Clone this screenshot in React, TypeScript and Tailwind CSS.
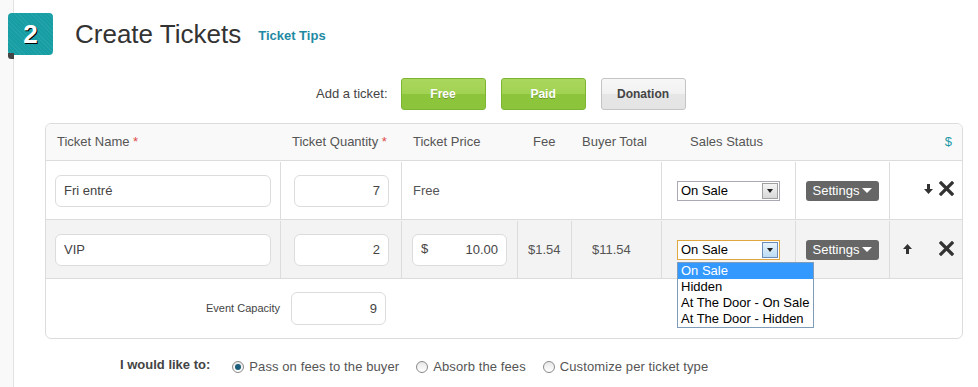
import { ReactNode } from "react";

// 販売ステータスのセレクト（見た目だけ）
function StatusSelect({ focused = false }: { focused?: boolean }) {
  return (
    <div
      className={
        "flex h-[20px] w-[103px] items-center border bg-white " +
        (focused ? "border-[#e0a640]" : "border-[#a9a9b4]")
      }
    >
      <span className="flex-1 pl-[3px] text-[13px] leading-none text-black">On Sale</span>
      <span
        className={
          "mr-[1px] flex h-[16px] w-[16px] items-center justify-center border " +
          (focused ? "border-[#6b8bb8] bg-gradient-to-b from-[#e6f2fb] to-[#bcdcf4]" : "border-[#a0a0a0] bg-gradient-to-b from-[#f4f4f4] to-[#d8d8d8]")
        }
      >
        <span className="h-0 w-0 border-x-[3px] border-t-[4px] border-x-transparent border-t-[#222]" />
      </span>
    </div>
  );
}

function SettingsButton() {
  return (
    <div className="flex h-[20px] w-[73px] items-center justify-center gap-[3px] rounded-[3px] bg-[#666] text-[13px] text-white">
      Settings
      <span className="h-0 w-0 border-x-[5px] border-t-[5px] border-x-transparent border-t-white" />
    </div>
  );
}

function Cross() {
  return (
    <svg width="15" height="15" viewBox="0 0 15 15">
      <path d="M2 2 L13 13 M13 2 L2 13" stroke="#333" strokeWidth="3.2" strokeLinecap="square" />
    </svg>
  );
}

function Arrow({ up }: { up?: boolean }) {
  return (
    <svg width="9" height="10" viewBox="0 0 9 10" className={up ? "" : "rotate-180"}>
      <path d="M4.5 0 L9 5 L6 5 L6 10 L3 10 L3 5 L0 5 Z" fill="#333" />
    </svg>
  );
}

function Field({ children, className = "" }: { children: ReactNode; className?: string }) {
  return (
    <div
      className={
        "flex h-[32px] items-center rounded-[6px] border border-[#dcdcdc] bg-white px-[8px] text-[13px] text-[#444] " +
        className
      }
    >
      {children}
    </div>
  );
}

function Radio({ checked, label }: { checked?: boolean; label: string }) {
  return (
    <div className="flex items-center gap-[5px]">
      <span className="flex h-[12px] w-[12px] items-center justify-center rounded-full border border-[#8a8a8a] bg-gradient-to-b from-[#e8e8e8] to-[#fff]">
        {checked && <span className="h-[6px] w-[6px] rounded-full bg-[#1a5d7a]" />}
      </span>
      <span className="text-[13px] tracking-[0.1px] text-[#555]">{label}</span>
    </div>
  );
}

export default function App() {
  return (
    <div className="flex h-[387px] w-[978px] overflow-hidden bg-white font-['Liberation_Sans',Arial,sans-serif]">
      {/* 左のサイドライン */}
      <div className="w-[14px] shrink-0 border-r border-[#e2e2e2] bg-[#f9f9f9]" />

      <div className="flex-1">
        {/* 見出し */}
        <div className="flex items-center pt-[13px]">
          <div className="relative -ml-[6px] flex h-[42px] w-[45px] items-center justify-center rounded-[4px] bg-[#169ea4] bg-[repeating-linear-gradient(45deg,rgba(255,255,255,0.06)_0px,rgba(255,255,255,0.06)_1px,transparent_1px,transparent_3px)]">
            <span className="text-[26px] font-bold leading-none text-white [text-shadow:1px_1px_0_#000]">2</span>
            <span className="absolute -bottom-[4px] left-0 h-[6px] w-[6px] rounded-bl-[3px] bg-[#444]" />
          </div>
          <h1 className="ml-[22px] text-[26px] leading-none text-[#333]">Create Tickets</h1>
          <a className="ml-[17px] mt-[4px] text-[13px] font-bold text-[#1f8aa3]">Ticket Tips</a>
        </div>

        {/* チケット追加ボタン */}
        <div className="mt-[23px] flex items-center pl-[302px]">
          <span className="mr-[13px] text-[13px] text-[#444]">Add a ticket:</span>
          <div className="flex h-[32px] w-[85px] items-center justify-center rounded-[3px] border border-[#7db532] bg-[linear-gradient(#a9d75e_0%,#a2d252_50%,#8cc53c_50%,#8cc53c_100%)] text-[12px] font-bold text-white [text-shadow:0_1px_0_rgba(0,0,0,0.25)]">
            Free
          </div>
          <div className="ml-[15px] flex h-[32px] w-[85px] items-center justify-center rounded-[3px] border border-[#7db532] bg-[linear-gradient(#a9d75e_0%,#a2d252_50%,#8cc53c_50%,#8cc53c_100%)] text-[12px] font-bold text-white [text-shadow:0_1px_0_rgba(0,0,0,0.25)]">
            Paid
          </div>
          <div className="ml-[15px] flex h-[32px] w-[85px] items-center justify-center rounded-[3px] border border-[#c4c4c4] bg-[linear-gradient(#f7f7f7_0%,#f1f1f1_50%,#e6e6e6_50%,#e4e4e4_100%)] text-[12px] font-bold text-[#444]">
            Donation
          </div>
        </div>

        {/* チケット表 */}
        <div className="ml-[31px] mt-[13px] w-[918px] rounded-[6px] border border-[#dcdcdc] text-[13px] text-[#555]">
          {/* ヘッダー */}
          <div className="flex h-[37px] items-center rounded-t-[6px] border-b border-[#dcdcdc] bg-[#f9f9f9]">
            <div className="w-[235px] pl-[11px]">
              Ticket Name <span className="text-[#e04b4b]">*</span>
            </div>
            <div className="w-[121px] pl-[11px]">
              Ticket Quantity <span className="text-[#e04b4b]">*</span>
            </div>
            <div className="w-[116px] pl-[11px]">Ticket Price</div>
            <div className="w-[54px] pl-[15px]">Fee</div>
            <div className="w-[90px] pl-[10px]">Buyer Total</div>
            <div className="w-[134px] pl-[28px]">Sales Status</div>
            <div className="w-[94px]" />
            <div className="flex-1 pr-[10px] text-right text-[#1f9aa6]">$</div>
          </div>

          {/* 1行目 */}
          <div className="flex h-[59px] border-b border-[#dcdcdc] bg-white pt-[1px]">
            <div className="flex w-[235px] items-center border-r border-[#dcdcdc] pl-[9px]">
              <Field className="w-[216px]">Fri entré</Field>
            </div>
            <div className="flex w-[121px] items-center border-r border-[#dcdcdc] pl-[13px]">
              <Field className="w-[95px] justify-end">7</Field>
            </div>
            <div className="flex w-[260px] items-center border-r border-[#dcdcdc] pl-[11px]">Free</div>
            <div className="flex w-[134px] items-center border-r border-[#dcdcdc] pl-[15px]">
              <StatusSelect />
            </div>
            <div className="flex w-[94px] items-center border-r border-[#dcdcdc] pl-[10px]">
              <SettingsButton />
            </div>
            <div className="flex flex-1 items-center justify-end gap-[6px] pb-[4px] pr-[8px]">
              <Arrow />
              <Cross />
            </div>
          </div>

          {/* 2行目 */}
          <div className="flex h-[59px] border-b border-[#dcdcdc] bg-[#f3f3f3] pt-[1px]">
            <div className="flex w-[235px] items-center border-r border-[#dcdcdc] pl-[9px]">
              <Field className="w-[216px]">VIP</Field>
            </div>
            <div className="flex w-[121px] items-center border-r border-[#dcdcdc] pl-[13px]">
              <Field className="w-[95px] justify-end">2</Field>
            </div>
            <div className="flex w-[116px] items-center border-r border-[#dcdcdc] pl-[10px]">
              <Field className="w-[95px] justify-between">
                <span className="-mt-[2px]">$</span>
                <span>10.00</span>
              </Field>
            </div>
            <div className="flex w-[54px] items-center border-r border-[#dcdcdc] pl-[10px]">$1.54</div>
            <div className="flex w-[90px] items-center border-r border-[#dcdcdc] pl-[20px]">$11.54</div>
            <div className="relative flex w-[134px] items-center border-r border-[#dcdcdc] pl-[15px]">
              <StatusSelect focused />
              {/* 開いたドロップダウン */}
              <div className="absolute left-[15px] top-[41px] z-10 w-[137px] border border-[#7f9db9] bg-white text-[13px] leading-[16px] text-black">
                <div className="bg-[#3399ff] pl-[3px] text-white">On Sale</div>
                <div className="pl-[3px]">Hidden</div>
                <div className="pl-[3px]">At The Door - On Sale</div>
                <div className="pl-[3px]">At The Door - Hidden</div>
              </div>
            </div>
            <div className="flex w-[94px] items-center border-r border-[#dcdcdc] pl-[10px]">
              <SettingsButton />
            </div>
            <div className="flex flex-1 items-center justify-between pb-[2px] pl-[13px] pr-[8px]">
              <Arrow up />
              <Cross />
            </div>
          </div>

          {/* 定員 */}
          <div className="flex h-[59px] items-center">
            <div className="w-[235px] pr-[1px] text-right text-[11px] text-[#444]">Event Capacity</div>
            <div className="pl-[10px]">
              <Field className="h-[33px] w-[95px] justify-end">9</Field>
            </div>
          </div>
        </div>

        {/* 手数料オプション */}
        <div className="mt-[18px] flex items-center pl-[106px]">
          <span className="mr-[22px] -mt-[4px] text-[13px] font-bold text-[#444]">I would like to:</span>
          <div className="flex items-center gap-[17px]">
            <Radio checked label="Pass on fees to the buyer" />
            <Radio label="Absorb the fees" />
            <Radio label="Customize per ticket type" />
          </div>
        </div>
      </div>
    </div>
  );
}
